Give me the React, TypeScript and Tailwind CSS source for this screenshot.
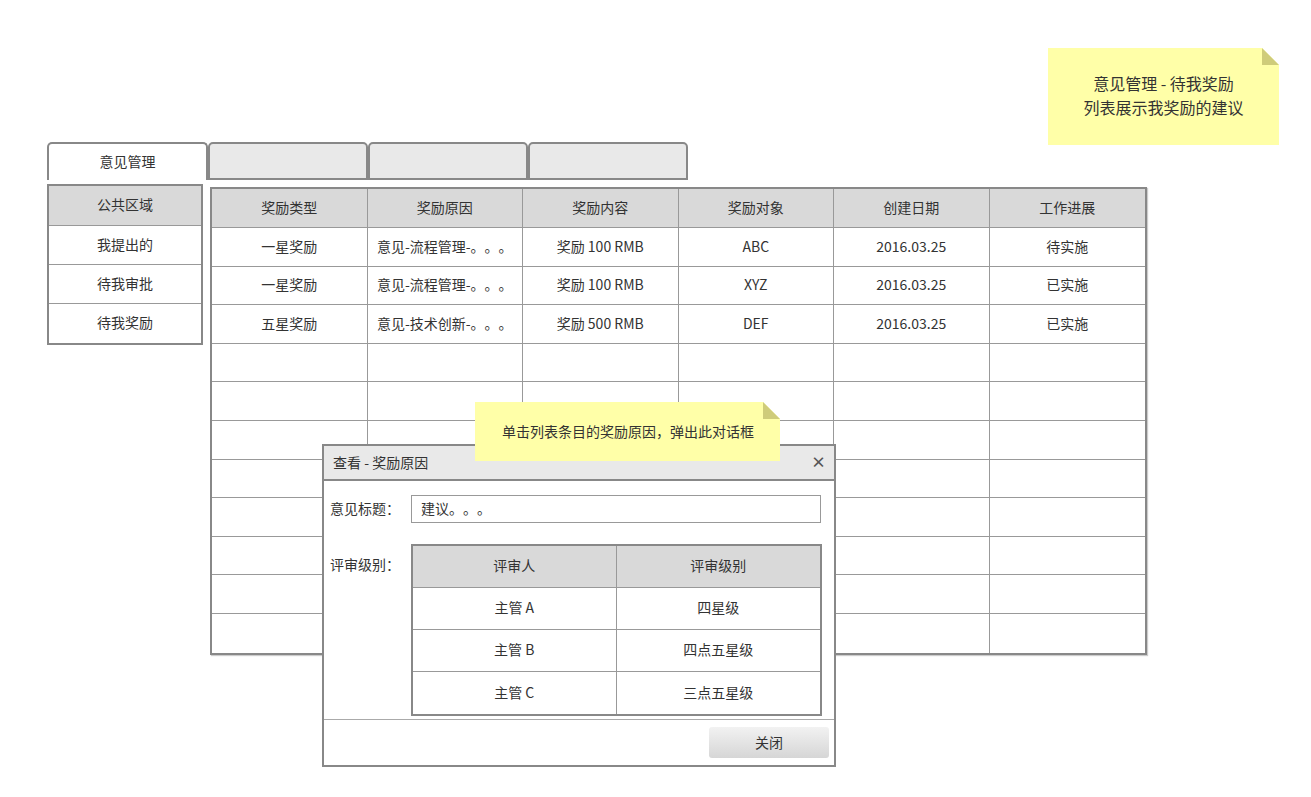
const font = { fontFamily: '"Noto Sans CJK SC", "Noto Sans", sans-serif' };

const columns = ["奖励类型", "奖励原因", "奖励内容", "奖励对象", "创建日期", "工作进展"];

const rows = [
  ["一星奖励", "意见-流程管理-。。。", "奖励 100 RMB", "ABC", "2016.03.25", "待实施"],
  ["一星奖励", "意见-流程管理-。。。", "奖励 100 RMB", "XYZ", "2016.03.25", "已实施"],
  ["五星奖励", "意见-技术创新-。。。", "奖励 500 RMB", "DEF", "2016.03.25", "已实施"],
];

const navItems = ["我提出的", "待我审批", "待我奖励"];

const reviews = [
  ["主管 A", "四星级"],
  ["主管 B", "四点五星级"],
  ["主管 C", "三点五星级"],
];

const Fold = () => (
  <svg className="absolute right-0 top-0" width="17" height="17" viewBox="0 0 17 17">
    <polygon points="0,0 17,0 17,17" fill="#ffffff" />
    <polygon points="0,0 17,17 0,17" fill="#cfcc7a" />
  </svg>
);

const App = () => {
  const empty = Array.from({ length: 8 }, () => ["", "", "", "", "", ""]);
  const allRows = [...rows, ...empty];

  return (
    <div
      className="relative w-[1311px] h-[797px] bg-white text-[14px] text-[#333] [text-spacing-trim:space-all]"
      style={font}
    >
      <div className="pt-[142px] pl-[47px]">
        {/* tabs */}
        <div className="flex h-[38px]">
          <div className="w-[161px] border-2 border-b-0 border-[#888] rounded-t-[5px] bg-white flex items-center justify-center pb-[2px]">
            意见管理
          </div>
          <div className="w-[160px] border-2 border-[#888] rounded-t-[5px] bg-[#e9e9e9]" />
          <div className="w-[160px] border-2 border-[#888] rounded-t-[5px] bg-[#e9e9e9]" />
          <div className="w-[160px] border-2 border-[#888] rounded-t-[5px] bg-[#e9e9e9]" />
        </div>

        <div className="flex items-start gap-[7px] mt-[4px]">
          {/* left nav */}
          <div className="w-[156px] border-2 border-[#888]">
            <div className="h-[40px] bg-[#d9d9d9] border-b border-[#999] flex items-center justify-center pb-[2px]">
              公共区域
            </div>
            {navItems.map((item, i) => (
              <div
                key={item}
                className={`h-[39px] flex items-center justify-center pb-[2px] ${i < navItems.length - 1 ? "border-b border-[#999]" : ""}`}
              >
                {item}
              </div>
            ))}
          </div>

          {/* main table */}
          <div className="mt-[3px] w-[937px] border-2 border-[#888] shadow-[1px_1px_1px_#ccc]">
            <div className="grid grid-cols-6 h-[39px] bg-[#d9d9d9] border-b border-[#999]">
              {columns.map((c, i) => (
                <div
                  key={c}
                  className={`flex items-center justify-center pb-[2px] ${i < 5 ? "border-r border-[#999]" : ""}`}
                >
                  {c}
                </div>
              ))}
            </div>
            {allRows.map((r, ri) => (
              <div
                key={ri}
                className={`grid grid-cols-6 h-[38.6px] ${ri < allRows.length - 1 ? "border-b border-[#999]" : ""}`}
              >
                {r.map((cell, ci) => (
                  <div
                    key={ci}
                    className={`flex items-center justify-center whitespace-nowrap pb-[1px] ${ci < 5 ? "border-r border-[#999]" : ""}`}
                  >
                    {cell}
                  </div>
                ))}
              </div>
            ))}
          </div>
        </div>
      </div>

      {/* top-right note */}
      <div className="absolute left-[1048px] top-[48px] w-[231px] h-[97px] bg-[#ffffa8] flex flex-col items-center justify-center text-[16px] leading-[24px] pb-[4px]">
        <Fold />
        <div>意见管理 - 待我奖励</div>
        <div>列表展示我奖励的建议</div>
      </div>

      {/* dialog */}
      <div className="absolute left-[322px] top-[444px] w-[514px] h-[323px] border-2 border-[#888] bg-white flex flex-col">
        <div className="h-[35px] bg-[#e9e9e9] border-b-2 border-[#888] flex items-center justify-between pl-[9px] pr-[8px] shrink-0">
          <span>查看 - 奖励原因</span>
          <span className="text-[15px] font-bold text-[#555]">×</span>
        </div>
        <div className="flex-1 px-[6px]">
          <div className="flex items-center mt-[14px]">
            <div className="w-[81px] pb-[2px]">意见标题：</div>
            <div className="w-[410px] h-[28px] border border-[#999] flex items-center px-[9px] pb-[2px]">建议。。。</div>
          </div>
          <div className="flex items-start mt-[21px]">
            <div className="w-[81px] pt-[10px]">评审级别：</div>
            <div className="w-[411px] border-2 border-[#888]">
              <div className="grid grid-cols-2 h-[42px] bg-[#d9d9d9] border-b border-[#999]">
                <div className="flex items-center justify-center border-r border-[#999] pb-[2px]">评审人</div>
                <div className="flex items-center justify-center pb-[2px]">评审级别</div>
              </div>
              {reviews.map((r, i) => (
                <div
                  key={r[0]}
                  className={`grid grid-cols-2 h-[42px] ${i < reviews.length - 1 ? "border-b border-[#999]" : ""}`}
                >
                  <div className="flex items-center justify-center border-r border-[#999] pb-[2px]">{r[0]}</div>
                  <div className="flex items-center justify-center pb-[2px]">{r[1]}</div>
                </div>
              ))}
            </div>
          </div>
        </div>
        <div className="h-[46px] border-t border-[#aaa] flex items-center justify-end pr-[5px] shrink-0">
          <div className="w-[120px] h-[31px] rounded-[3px] bg-gradient-to-b from-[#f2f2f2] to-[#d6d6d6] flex items-center justify-center">
            关闭
          </div>
        </div>
      </div>

      {/* dialog note */}
      <div className="absolute left-[475px] top-[402px] w-[305px] h-[59px] bg-[#ffffa8] flex items-center pl-[27px]">
        <Fold />
        <span>单击列表条目的奖励原因，弹出此对话框</span>
      </div>
    </div>
  );
};

export default App;
